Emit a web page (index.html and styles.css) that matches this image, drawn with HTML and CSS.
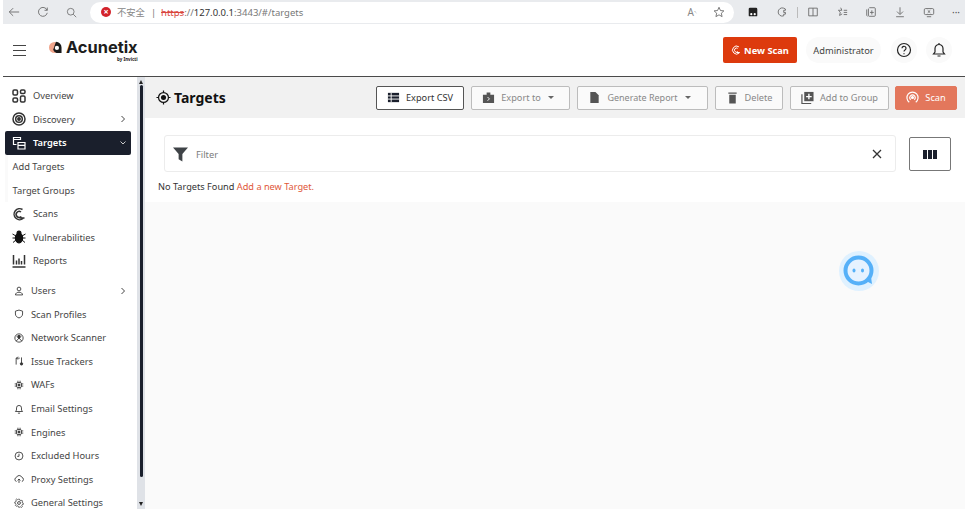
FILE: index.html
```html
<!DOCTYPE html>
<html lang="en">
<head>
<meta charset="utf-8">
<title>Targets</title>
<link rel="stylesheet" href="styles.css">
</head>
<body>
<div class="frame">
  <div class="browser">
    <svg class="bi bi-back" viewBox="0 0 14 14"><path d="M13 7H1.500M6 2.500 1.500 7 6 11.500"/></svg>
    <svg class="bi bi-reload" viewBox="0 0 14 14"><path d="M11.800 5A5.200 5.200 0 1 0 12 8M12 1.800V5H8.800"/></svg>
    <svg class="bi bi-search" viewBox="0 0 14 14"><circle cx="6" cy="6" r="4.300"/><path d="M9.200 9.200l3.800 3.800"/></svg>
    <div class="url">
      <span class="err">×</span>
      <span class="insecure">不安全</span>
      <span class="sep">|</span>
      <span class="addr"><s class="https">https</s>://<b>127.0.0.1</b>:3443/#/targets</span>
      <span class="grow"></span>
      <span class="aa">A<sup>৲</sup></span>
      <svg class="bi" viewBox="0 0 14 14"><path d="M7 1.500 8.700 5.300l4 .4-3 2.700.9 4L7 10.300l-3.600 2.100.9-4-3-2.700 4-.4z"/></svg>
    </div>
    <div class="tools">
      <svg class="bi solid" viewBox="0 0 14 14"><path d="M2 3.500A1.500 1.500 0 0 1 3.500 2h7A1.500 1.500 0 0 1 12 3.500V11a1 1 0 0 1-1 1H3a1 1 0 0 1-1-1z"/><circle cx="5" cy="9.500" r="1.300" fill="#fff"/><circle cx="9" cy="9.500" r="1.300" fill="#fff"/></svg>
      <svg class="bi" viewBox="0 0 14 14"><path d="M9 2.500A4.800 4.800 0 1 0 9 11.500V9.500H11V7.500H9V5H11V3.500z"/></svg>
      <span class="tsep"></span>
      <svg class="bi" viewBox="0 0 14 14"><path d="M2 2.500h10v9H2zM7 2.500v9"/></svg>
      <svg class="bi" viewBox="0 0 14 14"><path d="M5.500 2 6.800 5h-4L5 7.200 4.200 11l3-1.800M9 5h4M9 7.500h4M9 10h4"/></svg>
      <svg class="bi" viewBox="0 0 14 14"><path d="M5 2h6a1 1 0 0 1 1 1v8a1 1 0 0 1-1 1H5a1 1 0 0 1-1-1V3M2 4v7a3 3 0 0 0 1 1M8 5v5M5.800 7.500h4.400"/></svg>
      <svg class="bi" viewBox="0 0 14 14"><path d="M7 1.500v8M3.500 6.500 7 10l3.500-3.500M2.500 12.500h9"/></svg>
      <svg class="bi" viewBox="0 0 14 14"><path d="M3 3h8a1.500 1.500 0 0 1 1.500 1.500v4A1.500 1.500 0 0 1 11 10H3a1.500 1.500 0 0 1-1.500-1.500v-4A1.500 1.500 0 0 1 3 3zM5.500 5 8.500 8M8.500 5 5.500 8M4.500 12.500h5"/></svg>
      <span class="more">···</span>
    </div>
  </div>

  <header class="top">
    <button class="burger" type="button" aria-label="Menu"><i></i><i></i><i></i></button>
    <div class="logo">
      <svg class="logo-mark" viewBox="0 0 14 14"><circle cx="6" cy="7" r="6" fill="#f0a58c"/><path d="M7.500 .800a6.200 6.200 0 0 1 6 6.200v6H8A6 6 0 0 1 4.500 9.500z" fill="#1a1a1a"/><circle cx="8.500" cy="7.500" r="2.300" fill="#fff"/></svg>
      <div class="logo-text">
        <span class="logo-name">Acunetix</span>
        <span class="logo-by">by Invicti</span>
      </div>
    </div>
    <span class="grow"></span>
    <button class="new-scan" type="button">
      <svg viewBox="0 0 12 12" class="ns-icon"><path d="M9.500 2.200A4.800 4.800 0 1 0 10 9.500M8 4a2.500 2.500 0 1 0 .3 4M10.500 9H6.500"/></svg>
      New Scan
    </button>
    <span class="pill admin">Administrator</span>
    <span class="pill round">
      <svg viewBox="0 0 16 16" class="hi"><circle cx="8" cy="8" r="6.500"/><path d="M6 6.300a2 2 0 1 1 3 1.700c-.7.400-1 .8-1 1.500"/><path d="M8 11.200v1"/></svg>
    </span>
    <span class="pill round">
      <svg viewBox="0 0 16 16" class="hi"><path d="M2.500 12h11l-1.500-2V6.500a4 4 0 0 0-8 0V10zM6.500 14h3M8 1v1.500"/></svg>
    </span>
  </header>

  <div class="body">
    <nav class="side">
      <ul class="menu main-menu">
        <li class="item"><svg class="ic heavy" viewBox="0 0 14 14"><rect x="1" y="1" width="4.500" height="5" rx="1.200"/><rect x="8.500" y="1" width="4.500" height="3.500" rx="1.200"/><rect x="1" y="9" width="4.500" height="4" rx="1.200"/><rect x="8.500" y="7" width="4.500" height="6" rx="1.200"/></svg><span>Overview</span></li>
        <li class="item"><svg class="ic heavy" viewBox="0 0 14 14"><circle cx="7" cy="7" r="6"/><circle cx="7" cy="7" r="3.300"/><circle cx="7" cy="7" r="1.200" fill="#333"/></svg><span>Discovery</span><svg class="chev" viewBox="0 0 8 8"><path d="M2.500 1 5.500 4 2.500 7"/></svg></li>
        <li class="item active"><svg class="ic" viewBox="0 0 14 14"><path d="M1.500 1.500h7v2h-7zM1.500 3.500v5h3M6 6.500h7v6.500H6zM6 9.300h7"/></svg><span>Targets</span><svg class="chev" viewBox="0 0 8 8"><path d="M1.500 2.500 4 5l2.500-2.500"/></svg></li>
        <li class="item sub">Add Targets</li>
        <li class="item sub">Target Groups</li>
        <li class="item"><svg class="ic heavy" viewBox="0 0 14 14"><path d="M10.500 2.500A5.500 5.500 0 1 0 11 11.500M9 5a3 3 0 1 0 .3 4.500M12.500 11H7.500"/></svg><span>Scans</span></li>
        <li class="item"><svg class="ic fill" viewBox="0 0 14 14"><ellipse cx="7" cy="8" rx="3.600" ry="4.800"/><circle cx="7" cy="3" r="1.900"/><path class="legs" d="M.5 4 4 6M13.500 4 10 6M.5 8h3.500M13.500 8H10M1 12.500 4 10M13 12.500 10 10"/></svg><span>Vulnerabilities</span></li>
        <li class="item"><svg class="ic heavy" viewBox="0 0 14 14"><path d="M1.500 1v9.500M4.500 10.500V6.500M7 10.500V4.500M9.500 10.500V7M12.500 10.500V1M.5 13h13"/></svg><span>Reports</span></li>
      </ul>
      <ul class="menu settings-menu">
        <li class="item small"><svg class="ic" viewBox="0 0 14 14"><circle cx="7" cy="4.200" r="2.600"/><path d="M2 12.500c0-5 10-5 10 0z"/></svg><span>Users</span><svg class="chev" viewBox="0 0 8 8"><path d="M2.500 1 5.500 4 2.500 7"/></svg></li>
        <li class="item small"><svg class="ic" viewBox="0 0 14 14"><path d="M7 1.500 12 3v4c0 3-2.500 4.800-5 5.500C4.500 11.800 2 10 2 7V3z"/></svg><span>Scan Profiles</span></li>
        <li class="item small"><svg class="ic" viewBox="0 0 14 14"><circle cx="7" cy="7" r="5.800"/><circle cx="7" cy="5.500" r="1.800" fill="#333"/><path d="M3 11.500 7 7l4 4.500M4 5a3.500 3.500 0 0 1 6 0"/></svg><span>Network Scanner</span></li>
        <li class="item small"><svg class="ic" viewBox="0 0 14 14"><path d="M3 12V3h5M10.500 2v8"/><circle cx="10.500" cy="11" r="1.700" fill="#333"/><path d="M5.500 1 3.500 3l2 2"/></svg><span>Issue Trackers</span></li>
        <li class="item small"><svg class="ic" viewBox="0 0 14 14"><rect x="3.500" y="3.500" width="7" height="7" rx="2"/><circle cx="7" cy="7" r="1.500" fill="#333"/><path d="M5.500 1v2.500M8.500 1v2.500M5.500 10.500V13M8.500 10.500V13M1 5.500h2.500M1 8.500h2.500M10.500 5.500H13M10.500 8.500H13"/></svg><span>WAFs</span></li>
        <li class="item small"><svg class="ic" viewBox="0 0 14 14"><path d="M2 10.500h10l-1.500-2V5.500a3.500 3.500 0 0 0-7 0v3zM5.500 12.800h3"/></svg><span>Email Settings</span></li>
        <li class="item small"><svg class="ic" viewBox="0 0 14 14"><rect x="3.500" y="3.500" width="7" height="7" rx="2"/><circle cx="7" cy="7" r="1.500" fill="#333"/><path d="M5.500 1v2.500M8.500 1v2.500M5.500 10.500V13M8.500 10.500V13M1 5.500h2.500M1 8.500h2.500M10.500 5.500H13M10.500 8.500H13"/></svg><span>Engines</span></li>
        <li class="item small"><svg class="ic" viewBox="0 0 14 14"><circle cx="7" cy="7" r="5.500"/><path d="M7 3.800V7.500H4.500"/></svg><span>Excluded Hours</span></li>
        <li class="item small"><svg class="ic" viewBox="0 0 14 14"><path d="M3.500 10.500A3 3 0 0 1 3.500 4.700a4 4 0 0 1 7.500 0 3 3 0 0 1 0 5.800M7 12.500V7M5 9l2-2 2 2"/></svg><span>Proxy Settings</span></li>
        <li class="item small"><svg class="ic" viewBox="0 0 14 14"><circle cx="7" cy="7" r="2"/><path d="M6 1h2l.4 1.800 1.700.7 1.500-1 1.400 1.500-1 1.500.7 1.700 1.300.3v2l-1.800.4-.7 1.700 1 1.500-1.400 1.400-1.500-1-1.700.7L8 14H6l-.4-1.700-1.700-.7-1.500 1L1 11.200l1-1.500-.7-1.700L0 7.600v-2l1.800-.4.7-1.700-1-1.500L3 .6l1.500 1 1.100-.5z" transform="translate(1.100 .9) scale(.85)"/></svg><span>General Settings</span></li>
      </ul>
    </nav>
    <div class="scroll">
      <span class="arrow up"></span>
      <span class="thumb"></span>
      <span class="arrow down"></span>
    </div>

    <main class="content">
      <div class="title-bar">
        <svg class="t-icon" viewBox="0 0 16 16"><circle cx="8" cy="8" r="5.300"/><circle cx="8" cy="8" r="2.700" fill="#111" stroke="none"/><path d="M8 .5v2.500M8 13v2.500M.5 8H3M13 8h2.500"/></svg>
        <h1>Targets</h1>
        <span class="grow"></span>
        <div class="actions">
          <button class="btn on" type="button">
            <svg class="b-ic" viewBox="0 0 14 14"><path d="M1 2h12v10H1z" fill="currentColor"/><path d="M1 5.300h12M1 8.700h12M4.500 2v10" stroke="#fff" stroke-width="1" fill="none"/></svg>
            Export CSV</button>
          <button class="btn w-export" type="button">
            <svg class="b-ic" viewBox="0 0 14 14"><path d="M1 4h12v9H1zM5 4V1.500h4V4" fill="currentColor"/><path d="M6 6.500 8 8.500 6 10.500" stroke="#fff" stroke-width="1" fill="none"/></svg>
            Export to<i class="caret"></i></button>
          <button class="btn w-report" type="button">
            <svg class="b-ic" viewBox="0 0 14 14"><path d="M2.500 1h5.500l3.500 3.500V13h-9z" fill="currentColor"/></svg>
            Generate Report<i class="caret"></i></button>
          <button class="btn w-delete" type="button">
            <svg class="b-ic" viewBox="0 0 14 14"><path d="M2.500 1.500h9V3h-9zM3.500 4h7v9.500h-7z" fill="currentColor"/></svg>
            Delete</button>
          <button class="btn w-group" type="button">
            <svg class="b-ic" viewBox="0 0 14 14"><path d="M3.500 1h10v10h-10z" fill="currentColor"/><path d="M1 3.500V13.500h10" stroke="currentColor" fill="none" stroke-width="1.300"/><path d="M8.500 3v6M5.500 6h6" stroke="#fff" stroke-width="1.500" fill="none"/></svg>
            Add to Group</button>
          <button class="btn scan" type="button">
            <svg class="b-ic" viewBox="0 0 14 14" fill="none" stroke="currentColor" stroke-width="1.300"><path d="M3.500 12a6 6 0 1 1 7 0M5 9.500a3 3 0 1 1 4 0"/><circle cx="7" cy="7" r="1" fill="currentColor"/></svg>
            Scan</button>
        </div>
      </div>
      <div class="panel">
        <div class="filter-row">
          <div class="filter">
            <svg class="funnel" viewBox="0 0 16 16"><path d="M0 1h16L10 8v8l-4-2.500V8z"/></svg>
            <span class="ph">Filter</span>
            <span class="grow"></span>
            <svg class="x" viewBox="0 0 10 10"><path d="M1 1l8 8M9 1 1 9"/></svg>
          </div>
          <button class="cols" type="button" aria-label="Columns"><i></i><i></i><i></i></button>
        </div>
        <p class="none">No Targets Found <a href="#">Add a new Target.</a></p>
      </div>
      <div class="empty"></div>
    </main>
  </div>

  <div class="chat">
    <svg viewBox="0 0 40 40" class="chat-svg">
      <circle cx="20" cy="20" r="20" fill="#dff1ff"/>
      <circle cx="19.500" cy="19.500" r="13" fill="#e6f2ff" stroke="#55b0f8" stroke-width="4"/>
      <path d="M27 30l6 3-1-7z" fill="#55b0f8"/>
      <ellipse cx="15" cy="19.500" rx="1.500" ry="2" fill="#55b0f8"/>
      <ellipse cx="23.500" cy="19.500" rx="1.500" ry="2" fill="#55b0f8"/>
    </svg>
  </div>
</div>
</body>
</html>
```
FILE: styles.css
```css
* { box-sizing: border-box; }
html, body { margin: 0; height: 100%; background: #fff; overflow: hidden; }
body { font-family: "Noto Sans", "Noto Sans CJK SC", sans-serif; font-size: 9.300px; color: #333; }
ul { list-style: none; margin: 0; padding: 0; }
button { font-family: inherit; cursor: pointer; }
.grow { flex: 1; }

.frame { width: 971px; height: 509px; padding: 0 6px 0 3px; display: flex; flex-direction: column; position: relative; overflow: hidden; }

/* browser chrome */
.browser { height: 24px; flex: none; background: #e9ebee; display: flex; align-items: center; padding-left: 5px; }
.bi { width: 12px; height: 12px; flex: none; fill: none; stroke: #666; stroke-width: 1; }
.bi.solid { fill: #222; stroke: none; }
.bi-reload { margin-left: 17px; }
.bi-search { margin-left: 17px; width: 11px; height: 11px; }
.url { width: 644px; height: 21px; margin-left: 13px; background: #fff; border-radius: 11px; display: flex; align-items: center; padding: 0 9px 0 11px; font-size: 9.300px; color: #777; }
.err { width: 10px; height: 10px; border-radius: 50%; background: #d3232b; color: #fff; font-size: 9px; line-height: 10px; text-align: center; font-weight: 700; margin-right: 6px; }
.insecure { font-size: 9.300px; color: #888; }
.sep { margin: 0 5px 0 6px; color: #777; }
.addr { color: #777; font-size: 9.500px; }
.addr b { font-weight: 400; color: #333; }
.https { color: #d9453c; }
.aa { color: #888; font-size: 10px; margin-right: 16px; }
.aa sup { font-size: 5px; }
.tools { flex: 1; display: flex; align-items: center; gap: 17px; padding-left: 13px; }
.tsep { width: 1px; height: 11px; background: #bbb; margin: 0 -8px; }
.more { color: #555; font-size: 10px; }

/* top header */
.top { height: 53px; flex: none; border-bottom: 1px solid #4a4a4a; display: flex; align-items: center; padding: 0 13px 0 10px; }
.burger { width: 13px; height: 11px; padding: 0; border: 0; background: none; display: flex; flex-direction: column; justify-content: space-between; margin-top: 1px; }
.burger i { display: block; height: 1px; background: #444; }
.logo { display: flex; align-items: flex-start; margin: 0 0 0 23px; }
.logo-mark { width: 13px; height: 13px; margin-right: 4px; margin-top: 3px; }
.logo-text { display: flex; flex-direction: column; align-items: flex-end; }
.logo-name { font-size: 16.400px; line-height: 18px; font-weight: 700; color: #1d1d1d; font-family: "Inter", sans-serif; }
.logo-by { font-size: 4.500px; line-height: 6px; font-weight: 700; color: #222; }
.new-scan { width: 74px; height: 26px; background: #dd3a0d; color: #fff; border: 0; border-radius: 2px; font-size: 9.300px; font-weight: 700; display: flex; align-items: center; justify-content: center; gap: 3px; padding: 0; }
.ns-icon { width: 10px; height: 10px; fill: none; stroke: #fff; stroke-width: 1.200; }
.pill { background: #fafafa; height: 26px; border-radius: 13px; display: flex; align-items: center; justify-content: center; }
.admin { width: 75px; margin-left: 9px; font-size: 9.300px; color: #444; }
.round { width: 26px; margin-left: 10px; }
.round + .round { margin-left: 9px; }
.hi { width: 16px; height: 16px; fill: none; stroke: #222; stroke-width: 1.200; }

/* body */
.body { flex: 1; min-height: 0; display: flex; }
.side { width: 134px; flex: none; padding: 7px 6px 0 2px; }
.menu .item { height: 23.600px; display: flex; align-items: center; padding-left: 7px; font-size: 9.300px; color: #444; }
.ic { width: 14px; height: 14px; flex: none; fill: none; stroke: #333; stroke-width: 1.200; margin-right: 7px; }
.ic.heavy { stroke-width: 1.500; }
.ic.fill { fill: #111; stroke: #111; }
.legs { fill: none; stroke-width: 1; }
.chev { width: 8px; height: 8px; margin-left: auto; margin-right: 4px; fill: none; stroke: #444; stroke-width: 1; }
.menu .item.active { background: #1a1f2c; color: #fff; border-radius: 2px; font-weight: 600; }
.active .ic { stroke: #fff; }
.active .chev { stroke: #ccc; }
.menu .item.sub { border-left: 3px solid #fafafa; padding-left: 4.500px; }
.settings-menu { margin-top: 6px; }
.menu .item.small { padding-left: 9px; }
.small .ic { width: 10px; height: 10px; margin-right: 7px; }

.scroll { width: 8px; flex: none; background: #dfe2e7; display: flex; flex-direction: column; align-items: center; position: relative; }
.thumb { width: 3px; height: 392px; background: #1a1f2c; border-radius: 2px; margin-top: 1px; }
.arrow { width: 0; height: 0; border: 2.500px solid transparent; }
.arrow.up { border-bottom: 4px solid #222; border-top: 0; margin-top: 3px; }
.arrow.down { border-top: 4px solid #222; border-bottom: 0; margin-top: auto; margin-bottom: 3px; }

/* content */
.content { flex: 1; min-width: 0; display: flex; flex-direction: column; }
.title-bar { height: 41px; flex: none; background: #f1f1f1; display: flex; align-items: center; padding: 0 8px 0 11px; }
.t-icon { width: 15px; height: 15px; fill: none; stroke: #111; stroke-width: 1.300; margin-right: 3px; }
h1 { margin: 0; font-size: 14px; font-weight: 700; color: #111; }
.actions { display: flex; gap: 7px; }
.btn { height: 24px; background: #fafafa; border: 1px solid #bcbcbc; border-radius: 2px; font-size: 9.200px; color: #888; display: flex; align-items: center; justify-content: center; padding: 0; gap: 4px; }
.btn.on { width: 88px; background: #fff; border-color: #555; color: #333; }
.w-export { width: 99px; padding-right: 5px; }
.w-report { width: 131px; padding-right: 6px; font-size: 9px; }
.w-delete { width: 68px; }
.w-group { width: 99px; margin-right: -1px; }
.btn.scan { width: 62px; background: #e3775c; border-color: #e3775c; color: #fff; }
.b-ic { width: 13px; height: 13px; margin-right: 2px; color: #555; }
.on .b-ic { color: #1a1f2c; }
.scan .b-ic { color: #fff; }
.caret { width: 0; height: 0; border: 3px solid transparent; border-top: 3.500px solid #666; border-bottom: 0; margin-left: 3px; }

.panel { height: 84px; flex: none; background: #fff; padding: 17px 14px 0 13px; }
.filter-row { display: flex; align-items: flex-start; padding-left: 6px; }
.filter { flex: 1; height: 37px; border: 1px solid #ececec; border-radius: 3px; display: flex; align-items: center; padding: 0 13px 0 8px; }
.funnel { width: 15px; height: 16px; fill: #3f4347; margin-right: 8px; }
.ph { color: #7b7b7b; font-size: 9.300px; padding-top: 2px; }
.x { width: 10px; height: 10px; fill: none; stroke: #333; stroke-width: 1.300; }
.cols { width: 42px; height: 34px; margin: 2px 0 0 13px; background: #fff; border: 1px solid #777; border-radius: 2px; display: flex; align-items: center; justify-content: center; gap: 1px; padding: 0; }
.cols i { display: block; width: 3.700px; height: 9px; background: #1a1f2c; }
.none { margin: 8px 0 0; font-size: 9.200px; color: #333; line-height: 14px; }
.none a { color: #e0573a; text-decoration: none; }
.empty { flex: 1; background: #fafafa; }

.chat { position: absolute; left: 839px; top: 251px; width: 40px; height: 40px; }
.chat-svg { display: block; width: 40px; height: 40px; }
```
